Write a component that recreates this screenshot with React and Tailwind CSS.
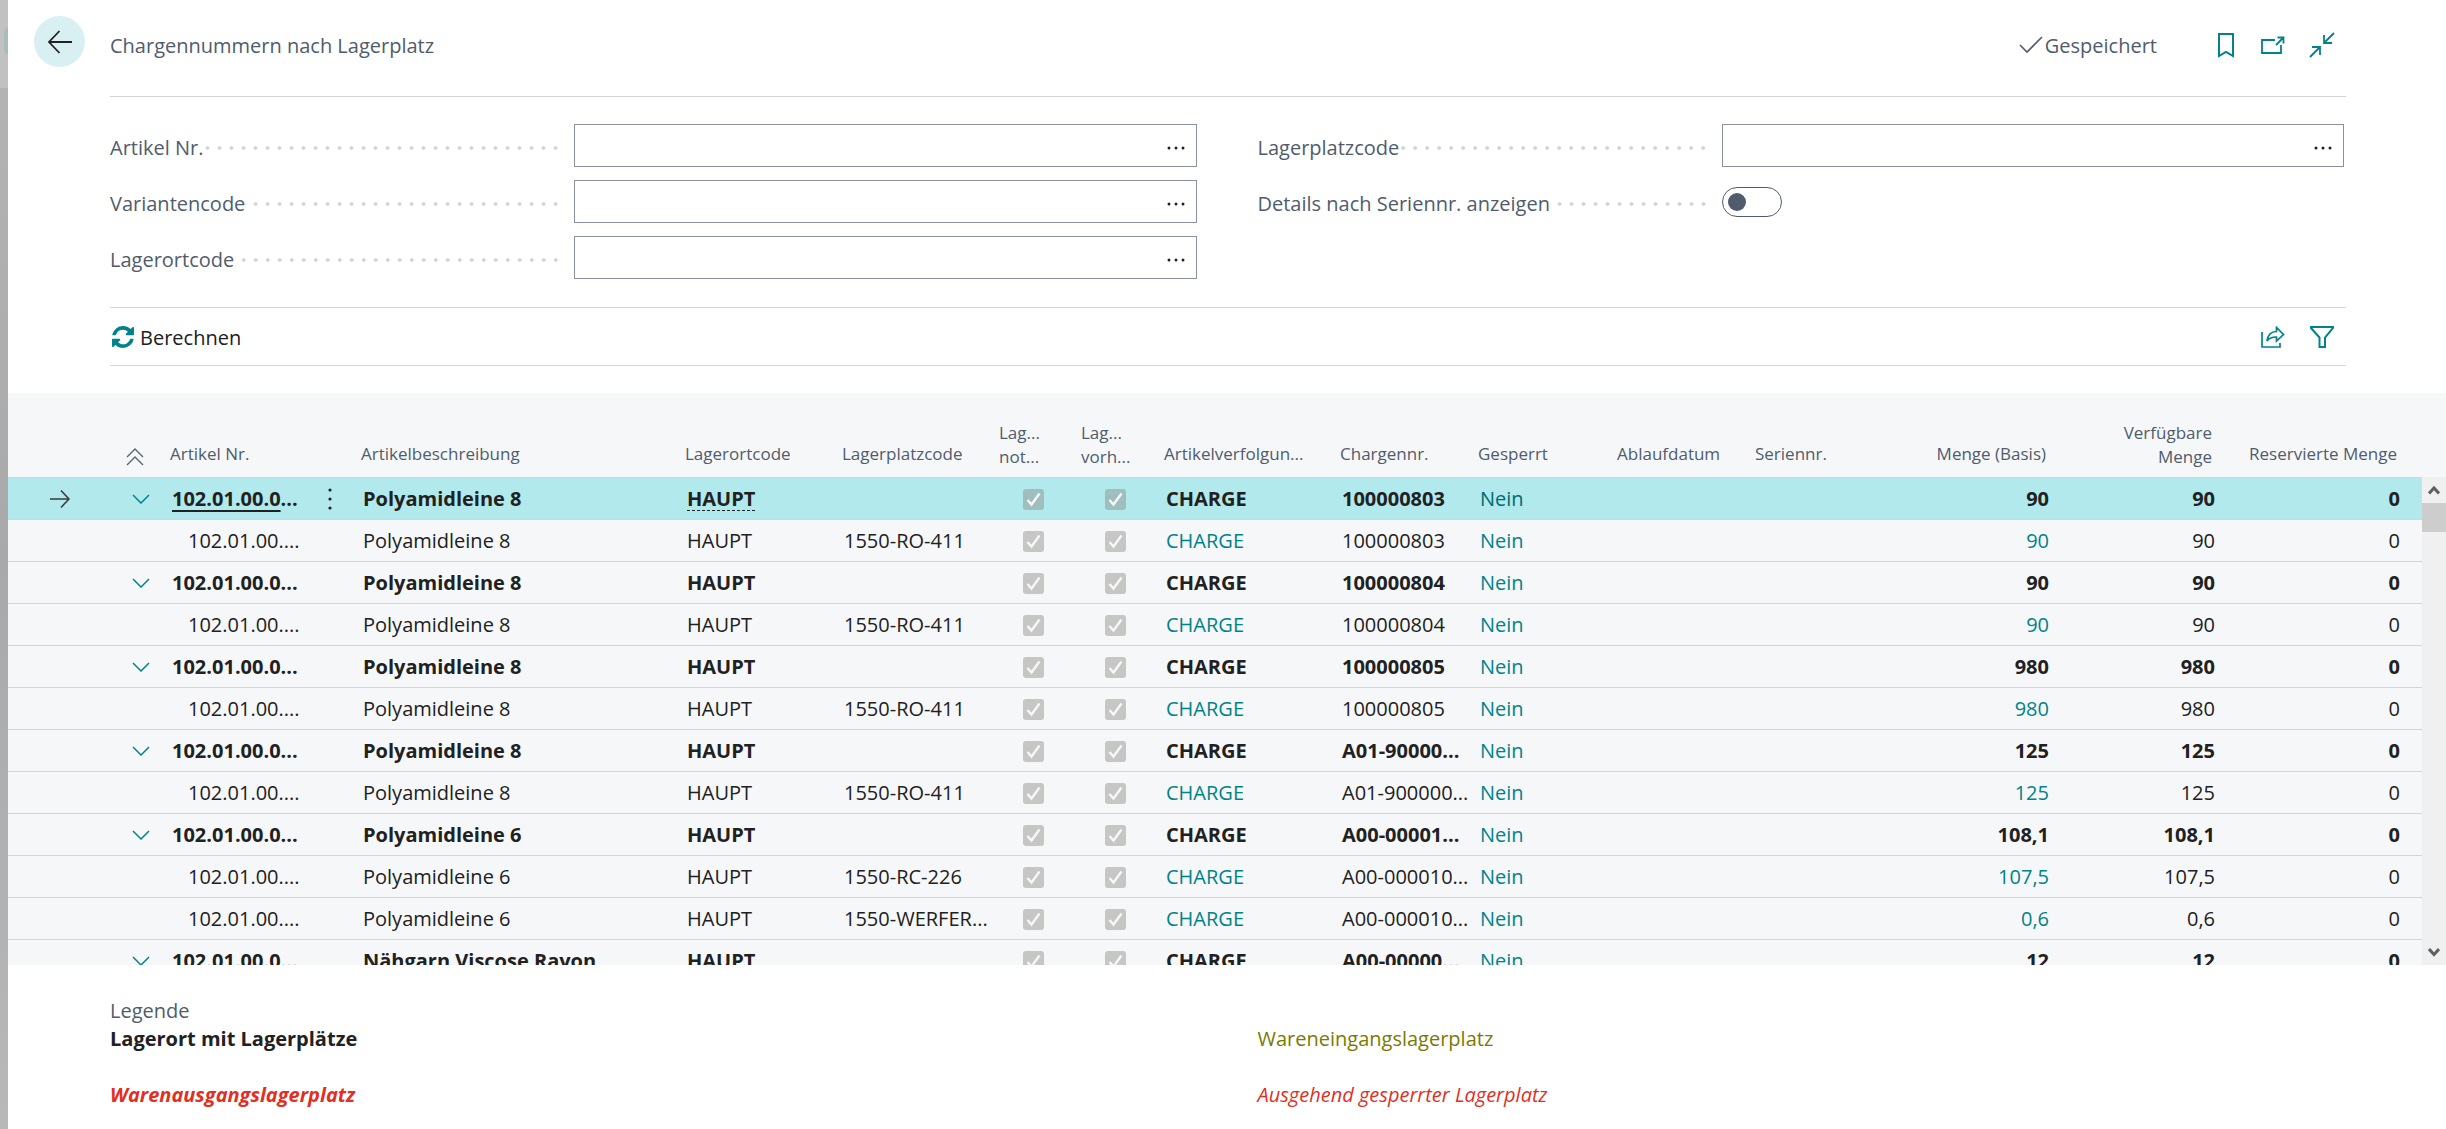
import { useState } from 'react';

const TEAL = '#00838a';

const rows = [
  { group: true, selected: true, nr: '102.01.00.0...', desc: 'Polyamidleine 8', platz: '', charge: '100000803', basis: '90', frei: '90' },
  { nr: '102.01.00....', desc: 'Polyamidleine 8', platz: '1550-RO-411', charge: '100000803', basis: '90', frei: '90' },
  { group: true, nr: '102.01.00.0...', desc: 'Polyamidleine 8', platz: '', charge: '100000804', basis: '90', frei: '90' },
  { nr: '102.01.00....', desc: 'Polyamidleine 8', platz: '1550-RO-411', charge: '100000804', basis: '90', frei: '90' },
  { group: true, nr: '102.01.00.0...', desc: 'Polyamidleine 8', platz: '', charge: '100000805', basis: '980', frei: '980' },
  { nr: '102.01.00....', desc: 'Polyamidleine 8', platz: '1550-RO-411', charge: '100000805', basis: '980', frei: '980' },
  { group: true, nr: '102.01.00.0...', desc: 'Polyamidleine 8', platz: '', charge: 'A01-90000...', basis: '125', frei: '125' },
  { nr: '102.01.00....', desc: 'Polyamidleine 8', platz: '1550-RO-411', charge: 'A01-900000...', basis: '125', frei: '125' },
  { group: true, nr: '102.01.00.0...', desc: 'Polyamidleine 6', platz: '', charge: 'A00-00001...', basis: '108,1', frei: '108,1' },
  { nr: '102.01.00....', desc: 'Polyamidleine 6', platz: '1550-RC-226', charge: 'A00-000010...', basis: '107,5', frei: '107,5' },
  { nr: '102.01.00....', desc: 'Polyamidleine 6', platz: '1550-WERFER...', charge: 'A00-000010...', basis: '0,6', frei: '0,6' },
  { group: true, nr: '102.01.00.0...', desc: 'Nähgarn Viscose Rayon', platz: '', charge: 'A00-00000...', basis: '12', frei: '12' },
];

function Icon({ w, h, children, color = TEAL, stroke = 2 }) {
  return (
    <svg width={w} height={h} viewBox={`0 0 ${w} ${h}`} fill="none" stroke={color} strokeWidth={stroke} aria-hidden="true" className="shrink-0">
      {children}
    </svg>
  );
}

function Label({ htmlFor, children }) {
  return (
    <div className="flex w-[464px] shrink-0 items-center pr-3">
      <label htmlFor={htmlFor} className="whitespace-nowrap pt-1">{children}</label>
      <span className="mt-1 h-3 flex-1 bg-[radial-gradient(circle,#d0d3d7_1.5px,transparent_2px)] bg-[length:12px_12px] bg-right" />
    </div>
  );
}

function LookupField({ id, label }) {
  return (
    <div className="flex h-[43px]">
      <Label htmlFor={id}>{label}</Label>
      <div className="flex flex-1 border border-[#8a909e]">
        <input id={id} type="text" className="min-w-0 flex-1 px-3 outline-none" />
        <button type="button" aria-label={`${label} auswählen`} className="flex w-10 items-center justify-center pt-1 pl-1">
          <svg width="18" height="4" viewBox="0 0 18 4" fill="#212121" className="mr-1">
            <circle cx="2" cy="2" r="1.5" />
            <circle cx="9" cy="2" r="1.5" />
            <circle cx="16" cy="2" r="1.5" />
          </svg>
        </button>
      </div>
    </div>
  );
}

function Check({ label }) {
  return (
    <span className="relative block size-[21px]">
      <input type="checkbox" aria-label={label} checked disabled readOnly className="block size-[21px] appearance-none rounded-[3px] bg-[#8b8984]/45" />
      <svg viewBox="0 0 21 21" className="absolute inset-0" fill="none" stroke="#f6f7f9" strokeWidth="2.4" aria-hidden="true">
        <path d="M4.5 11 L8.5 15.5 L16.5 4.5" />
      </svg>
    </span>
  );
}

function Row({ row }) {
  const link = row.selected ? 'text-[#006b70]' : 'text-[#00838a]';
  return (
    <tr
      className={`h-[42px] border-t border-[#d2d5da] [&>td]:pt-[2px] [&>td]:pl-2 [&>td]:whitespace-nowrap ${row.selected ? 'bg-[#b1e9ec]' : ''} ${row.group ? 'font-bold' : ''}`}
    >
      <td>
        {row.selected && (
          <span className="flex pl-[34px]">
            <Icon w={20} h={20} color="#3a3a3a">
              <path d="M0 10 H19 M11 1.5 L19 10 L11 18.5" strokeWidth="1.6" />
            </Icon>
          </span>
        )}
      </td>
      <td>
        {row.group && (
          <button type="button" aria-label="Zuklappen" className="flex pl-[14px]">
            <Icon w={18} h={10} stroke={1.5}>
              <path d="M1 1 L9 9 L17 1" />
            </Icon>
          </button>
        )}
      </td>
      <td>
        {row.selected ? (
          <a href="#artikel">
            <span className="underline decoration-2 underline-offset-4">102.01.00.0</span>...
          </a>
        ) : (
          <span className={row.group ? '' : 'pl-4'}>{row.nr}</span>
        )}
      </td>
      <td>
        {row.selected && (
          <button type="button" aria-label="Weitere Optionen" className="flex pl-3">
            <svg width="4" height="22" viewBox="0 0 4 22" fill="#212121">
              <circle cx="2" cy="2" r="1.6" />
              <circle cx="2" cy="11" r="1.6" />
              <circle cx="2" cy="20" r="1.6" />
            </svg>
          </button>
        )}
      </td>
      <td>{row.desc}</td>
      <td>
        <span className={row.selected ? 'underline decoration-dashed decoration-1 underline-offset-4' : ''}>HAUPT</span>
      </td>
      <td>{row.platz}</td>
      <td><div className="pl-[22px]"><Check label="Lagerplatz notwendig" /></div></td>
      <td><div className="pl-[22px]"><Check label="Lagerplatz vorhanden" /></div></td>
      <td>{row.group ? 'CHARGE' : <a href="#charge" className={link}>CHARGE</a>}</td>
      <td>{row.charge}</td>
      <td><a href="#gesperrt" className={`font-normal ${link}`}>Nein</a></td>
      <td />
      <td />
      <td className="pr-[5px] text-right">{row.group ? row.basis : <a href="#menge" className={link}>{row.basis}</a>}</td>
      <td className="pr-[5px] text-right">{row.frei}</td>
      <td className="pr-[22px] text-right">0</td>
    </tr>
  );
}

export default function App() {
  const [details, setDetails] = useState(false);

  return (
    <div className="flex h-screen overflow-hidden bg-white font-['Open_Sans','Noto_Sans',sans-serif] text-[20px] leading-7 text-[#212121]">
      {/* dimmed page behind the dialog */}
      <div className="w-2 shrink-0 overflow-hidden bg-linear-to-b from-[#b5b5b5] via-[#a9a9a9] to-[#b8b8b8]">
        <div className="h-[88px] bg-[#c1c1c1] pt-[27px] pl-1">
          <div className="h-7 w-3 rounded-full bg-[#a8bcbd]" />
        </div>
      </div>

      <main className="flex min-w-0 flex-1 flex-col">
        <header className="flex h-24 pr-[100px] pl-[26px] text-[#505c6d]">
          <button type="button" aria-label="Zurück" className="mt-4 flex size-[51px] shrink-0 items-center justify-center rounded-full bg-[#d9f0f2]">
            <Icon w={26} h={26} color="#212121">
              <path d="M25 13 H2 M12.5 2 L2 13 L12.5 24" strokeWidth="1.8" />
            </Icon>
          </button>
          <h1 className="mt-8 ml-[25px] flex-1">Chargennummern nach Lagerplatz</h1>
          <div className="flex h-[90px] items-center pr-[11px]">
            <Icon w={24} h={18} color="#505c6d" stroke={1.6}>
              <path d="M1 9 L8 16 L23 1" />
            </Icon>
            <span className="ml-[2px] pt-[2px]">Gespeichert</span>
            <button type="button" aria-label="Lesezeichen" className="ml-[60px]">
              <Icon w={18} h={26}>
                <path d="M2 2 H16 V24 L9 20 L2 24 Z" />
              </Icon>
            </button>
            <button type="button" aria-label="In neuem Fenster öffnen" className="ml-[26px]">
              <Icon w={24} h={18}>
                <path d="M14 4 H1 V17 H20 V9 M15 9 L23 1 M16.5 1.5 H22.5 V7.5" strokeWidth="1.8" />
              </Icon>
            </button>
            <button type="button" aria-label="Verkleinern" className="ml-6">
              <Icon w={26} h={26}>
                <path d="M25 1 L15 11 M15 3 V11 H23 M1 25 L11 15 M3 15 H11 V23" strokeWidth="1.8" />
              </Icon>
            </button>
          </div>
        </header>

        <div className="mr-[100px] ml-[102px]">
          <form className="grid h-[212px] grid-cols-2 items-start gap-x-[61px] border-y border-[#d2d5da] pt-[27px] pr-[2px] text-[#505c6d]">
            <div className="flex flex-col gap-[13px]">
              <LookupField id="artikel" label="Artikel Nr." />
              <LookupField id="variante" label="Variantencode" />
              <LookupField id="lagerort" label="Lagerortcode" />
            </div>
            <div className="flex flex-col gap-[13px]">
              <LookupField id="lagerplatz" label="Lagerplatzcode" />
              <div className="flex h-[43px] items-center">
                <Label htmlFor="details">Details nach Seriennr. anzeigen</Label>
                <span className="relative block h-[30px] w-[60px]">
                  <input
                    id="details"
                    type="checkbox"
                    role="switch"
                    checked={details}
                    onChange={() => setDetails(!details)}
                    className="peer block h-[30px] w-[60px] appearance-none rounded-full border border-[#505c6d]"
                  />
                  <span className="pointer-events-none absolute top-[6px] left-[6px] size-[18px] rounded-full bg-[#505c6d] peer-checked:left-9" />
                </span>
              </div>
            </div>
          </form>

          <div className="flex h-[58px] items-center border-b border-[#d2d5da] pr-[11px]">
            <button type="button" className="flex flex-1 items-center gap-[6px] pl-[2px]">
              <svg width="22" height="22" viewBox="0 0 1536 1536" fill={TEAL} aria-hidden="true">
                <path d="M1511 928q0 5-1 7-64 268-268 434.500T764 1536q-146 0-282.500-55T238 1324l-129 129q-19 19-45 19t-45-19-19-45V960q0-26 19-45t45-19h448q26 0 45 19t19 45-19 45l-137 137q71 66 161 102t187 36q134 0 250-65t186-179q11-17 53-117 8-23 30-23h192q13 0 22.500 9.500t9.500 22.500zm25-800v448q0 26-19 45t-45 19h-448q-26 0-45-19t-19-45 19-45l138-138Q969 256 768 256q-134 0-250 65T332 500q-11 17-53 117-8 23-30 23H50q-13 0-22.500-9.500T18 608v-7q65-268 270-434.500T768 0q146 0 284 55.500T1297 212l130-129q19-19 45-19t45 19 19 45z" />
              </svg>
              <span className="pt-[2px]">Berechnen</span>
            </button>
            <button type="button" aria-label="Teilen">
              <Icon w={24} h={22}>
                <path d="M1 6 V21 H19 V17 M6 15 C7 8 10 5.500 15.500 5.500 V1.500 L22.500 8.500 L15.500 15 V11 C11 11 8 12 6 15 Z" strokeWidth="1.7" />
              </Icon>
            </button>
            <button type="button" aria-label="Filtern" className="ml-6">
              <Icon w={26} h={24}>
                <path d="M2 2 H24 V3 L16 12.500 V22 H10.500 V12.500 L2 3 Z" />
              </Icon>
            </button>
          </div>
        </div>

        <section className="mt-[27px] flex min-h-0 flex-1 overflow-hidden bg-[#f6f7f9]">
          <div className="min-w-0 flex-1 overflow-hidden">
            <table className="w-full table-fixed border-collapse text-left">
              <colgroup>
                <col className="w-[102px]" />
                <col className="w-[54px]" />
                <col className="w-[144px]" />
                <col className="w-[47px]" />
                <col />
                <col className="w-[157px]" />
                <col className="w-[157px]" />
                <col className="w-[82px]" />
                <col className="w-[83px]" />
                <col className="w-[176px]" />
                <col className="w-[138px]" />
                <col className="w-[139px]" />
                <col className="w-[138px]" />
                <col className="w-[139px]" />
                <col className="w-[166px]" />
                <col className="w-[166px]" />
                <col className="w-[202px]" />
              </colgroup>
              <thead className="text-[17px] leading-6 text-[#505c6d]">
                <tr className="h-[84px] [&>th]:pl-[6px] [&>th]:align-bottom [&>th]:font-normal [&>th]:whitespace-nowrap">
                  <th className="pb-[11px]" />
                  <th className="pb-[11px]">
                    <button type="button" aria-label="Alle zuklappen" className="flex pl-[10px]">
                      <Icon w={18} h={18} color="#5c6470" stroke={1.4}>
                        <path d="M1 9 L9 1 L17 9 M1 17 L9 9 L17 17" />
                      </Icon>
                    </button>
                  </th>
                  <th className="pb-[11px]">Artikel Nr.</th>
                  <th className="pb-[11px]" />
                  <th className="pb-[11px]">Artikelbeschreibung</th>
                  <th className="pb-[11px]">Lagerortcode</th>
                  <th className="pb-[11px]">Lagerplatzcode</th>
                  <th className="pb-2">Lag...<br />not...</th>
                  <th className="pb-2">Lag...<br />vorh...</th>
                  <th className="pb-[11px]">Artikelverfolgun...</th>
                  <th className="pb-[11px]">Chargennr.</th>
                  <th className="pb-[11px]">Gesperrt</th>
                  <th className="pb-[11px]">Ablaufdatum</th>
                  <th className="pb-[11px]">Seriennr.</th>
                  <th className="pr-2 pb-[11px] text-right">Menge (Basis)</th>
                  <th className="pr-2 pb-2 text-right">Verfügbare<br />Menge</th>
                  <th className="pr-[25px] pb-[11px] text-right">Reservierte Menge</th>
                </tr>
              </thead>
              <tbody>
                {rows.map((row, i) => <Row key={i} row={row} />)}
              </tbody>
            </table>
          </div>
          <div className="mt-[84px] flex w-6 shrink-0 flex-col bg-[#f0f0f0]">
            <button type="button" aria-label="Nach oben" className="flex h-[26px] items-center justify-center">
              <Icon w={12} h={12} color="#606060" stroke={3}>
                <path d="M1 9.500 L6 4 L11 9.500" />
              </Icon>
            </button>
            <div className="h-[29px] bg-[#cdcdcd]" />
            <button type="button" aria-label="Nach unten" className="mt-auto flex h-[26px] items-center justify-center">
              <Icon w={12} h={12} color="#606060" stroke={3}>
                <path d="M1 3 L6 8.500 L11 3" />
              </Icon>
            </button>
          </div>
        </section>

        <footer className="mr-[100px] ml-[102px] h-[164px] pt-8 pr-[2px]">
          <h2 className="text-[#505c6d]">Legende</h2>
          <div className="grid grid-cols-2 gap-x-[61px] gap-y-7">
            <p className="font-bold">Lagerort mit Lagerplätze</p>
            <p className="text-[#7b7a00]">Wareneingangslagerplatz</p>
            <p className="font-bold text-[#e32f22] italic">Warenausgangslagerplatz</p>
            <p className="text-[#e32f22] italic">Ausgehend gesperrter Lagerplatz</p>
          </div>
        </footer>
      </main>
    </div>
  );
}
